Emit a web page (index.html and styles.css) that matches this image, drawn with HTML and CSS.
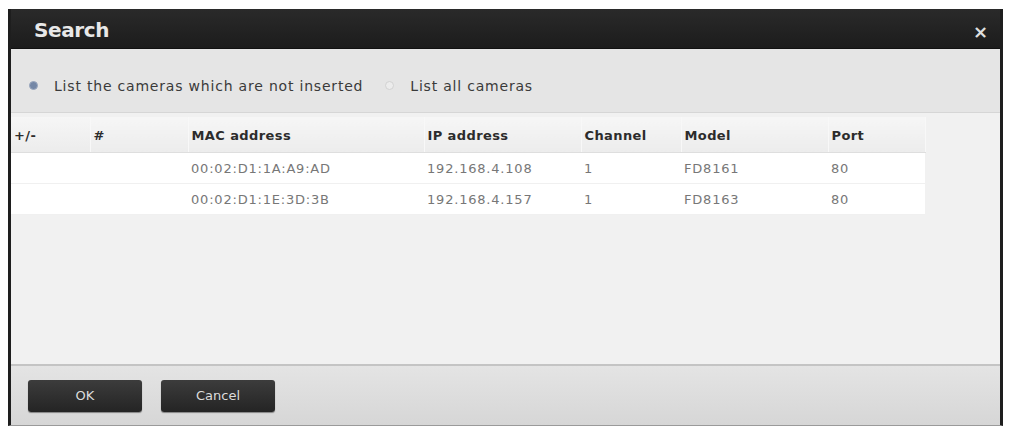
FILE: index.html
```html
<!DOCTYPE html>
<html lang="en">
<head>
    <meta charset="UTF-8">
    <title>Search</title>
    <link rel="stylesheet" href="styles.css">
</head>
<body>
    <div class="dialog">
        <div class="titlebar">
            <h1>Search</h1>
            <span class="close">&times;</span>
        </div>
        <div class="options">
            <label class="option"><span class="radio checked"></span>List the cameras which are not inserted</label>
            <label class="option"><span class="radio"></span>List all cameras</label>
        </div>
        <div class="content">
            <table class="cameras">
                <thead>
                    <tr>
                        <th class="c-sel">+/-</th>
                        <th class="c-num">#</th>
                        <th class="c-mac">MAC address</th>
                        <th class="c-ip">IP address</th>
                        <th class="c-ch">Channel</th>
                        <th class="c-model">Model</th>
                        <th class="c-port">Port</th>
                    </tr>
                </thead>
                <tbody>
                    <tr>
                        <td></td>
                        <td></td>
                        <td>00:02:D1:1A:A9:AD</td>
                        <td>192.168.4.108</td>
                        <td>1</td>
                        <td>FD8161</td>
                        <td>80</td>
                    </tr>
                    <tr>
                        <td></td>
                        <td></td>
                        <td>00:02:D1:1E:3D:3B</td>
                        <td>192.168.4.157</td>
                        <td>1</td>
                        <td>FD8163</td>
                        <td>80</td>
                    </tr>
                </tbody>
            </table>
        </div>
        <div class="footer">
            <button>OK</button>
            <button>Cancel</button>
        </div>
    </div>
</body>
</html>
```
FILE: styles.css
```css
body {
    margin: 0;
    padding: 9px 7px 0 8px;
    background-color: #fff;
    font-family: "DejaVu Sans", Verdana, sans-serif;
}

.dialog {
    height: 417px;
    border-left: 3px solid #1e1e1e;
    border-right: 3px solid #1e1e1e;
    border-bottom: 1px solid #9a9a9a;
    display: flex;
    flex-direction: column;
    background-color: #f1f1f1;
    box-sizing: border-box;
}

.titlebar {
    height: 40px;
    flex: none;
    display: flex;
    align-items: center;
    justify-content: space-between;
    padding: 3px 12px 0 23px;
    box-sizing: border-box;
    background: linear-gradient(#2a2a2a, #1c1c1c);
    border-bottom: 1px solid #111;
}

.titlebar h1 {
    margin: 0;
    color: #e8e8e8;
    font-size: 20px;
    font-weight: bold;
    letter-spacing: -0.4px;
}

.close {
    color: #e0e0e0;
    font-size: 18px;
    font-weight: bold;
    line-height: 1;
    margin-top: 3px;
}

.options {
    height: 64px;
    flex: none;
    display: flex;
    align-items: center;
    gap: 22px;
    padding: 10px 0 0 18px;
    box-sizing: border-box;
    background-color: #e5e5e5;
    border-bottom: 1px solid #d6d6d6;
}

.option {
    display: flex;
    align-items: center;
    gap: 16px;
    font-size: 14px;
    letter-spacing: 0.8px;
    color: #3a3a3a;
}

.radio {
    width: 7px;
    height: 7px;
    border-radius: 50%;
    background-color: #ececec;
    border: 1px solid #d2d2d2;
}

.radio.checked {
    background-color: #7487a6;
    border-color: #9aa7bd;
}

.content {
    flex: 1;
    padding-top: 4px;
    border-bottom: 2px solid #c4c4c4;
}

.cameras {
    width: 914px;
    table-layout: fixed;
    border-collapse: collapse;
    font-size: 13px;
}

.cameras th,
.cameras td {
    box-sizing: border-box;
    padding: 0 0 0 3px;
    text-align: left;
}

.cameras th {
    height: 35px;
    padding-top: 2px;
    font-weight: bold;
    font-size: 13px;
    letter-spacing: 0.4px;
    color: #2c2c2c;
    background: linear-gradient(#f6f6f6, #ececec);
    border-bottom: 1px solid #dedede;
    border-right: 1px solid #f8f8f8;
}

.cameras td {
    height: 31px;
    padding-top: 2px;
    color: #777;
    letter-spacing: 0.8px;
    background-color: #fff;
    border-bottom: 1px solid #f0f0f0;
}

.c-sel { width: 79px; }
.c-num { width: 98px; }
.c-mac { width: 236px; }
.c-ip { width: 157px; }
.c-ch { width: 100px; }
.c-model { width: 147px; }
.c-port { width: 97px; }

.footer {
    height: 59px;
    flex: none;
    display: flex;
    align-items: center;
    gap: 19px;
    padding: 0 0 0 17px;
    background: linear-gradient(#e4e4e4, #d6d6d6);
}

.footer button {
    width: 114px;
    height: 32px;
    border: none;
    border-radius: 3px;
    background: linear-gradient(#3c3c3c, #242424);
    color: #dcdcdc;
    font-family: "DejaVu Sans", Verdana, sans-serif;
    font-size: 13px;
    box-shadow: 0 1px 1px rgba(0, 0, 0, 0.4);
}
```
